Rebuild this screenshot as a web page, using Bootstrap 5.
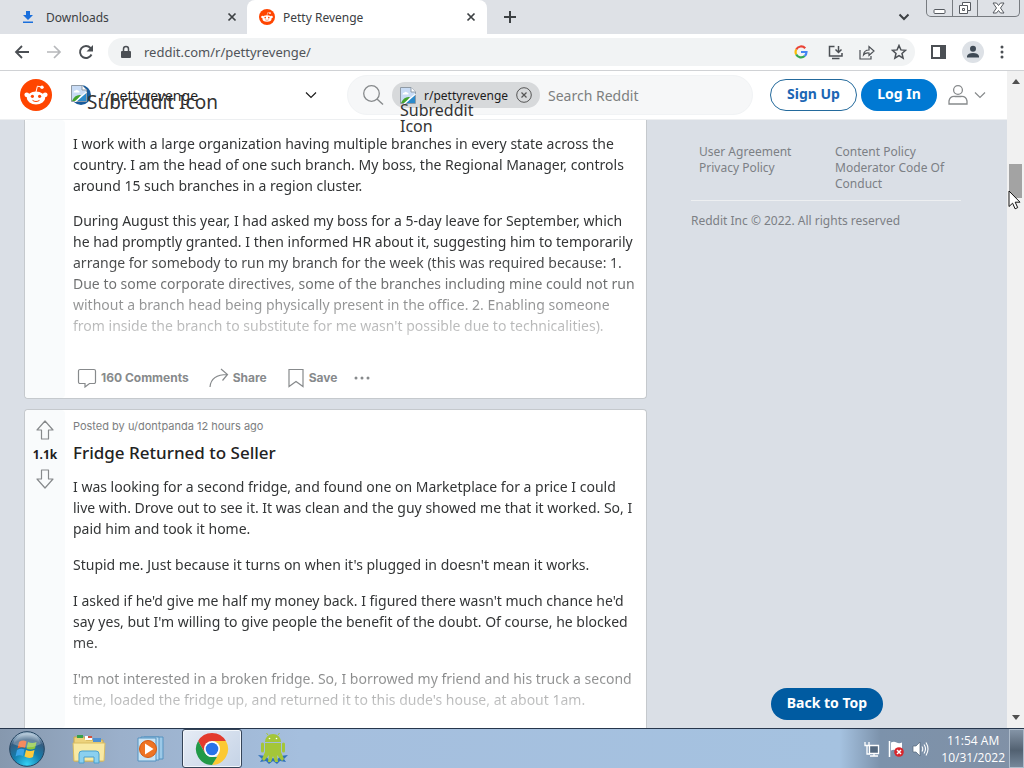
<!DOCTYPE html>
<html lang="en">
<head>
<meta charset="utf-8">
<meta name="viewport" content="width=device-width, initial-scale=1">
<title>Petty Revenge</title>
<link href="https://cdn.jsdelivr.net/npm/bootstrap@5.3.0/dist/css/bootstrap.min.css" rel="stylesheet">
<style>
body{font-family:"Noto Sans","Open Sans",sans-serif;font-size:14px;line-height:21px;color:#1c1c1c;background:#dae0e6}
button{background:none;border:0;padding:0;color:inherit;font:inherit}
svg{display:block;flex:none}
a{color:inherit;text-decoration:none}
.tabstrip{height:34px;background:#dee1e6;font-size:12px;color:#3c4043}
.browser-tab{width:247px;padding:0 10px 0 18px}
.tab-on{background:#fff;border-radius:8px 8px 0 0;width:240px;padding:0 11px 0 12px}
.win-buttons{height:17px;border:1px solid #777b80;border-top:0;border-radius:0 0 5px 5px;margin-right:4px}
.win-buttons button{width:25px;display:grid;place-items:center}
.win-buttons button+button{border-left:1px solid #777b80}
.win-buttons button:last-child{width:42px}
.toolbar{height:37px;background:#fff;border-bottom:1px solid #d0d2d5;color:#4b4f54;padding:0 20px 0 14px}
.omnibox{height:28px;background:#f1f3f4;border-radius:14px;padding:0 8px 0 12px;margin-left:14px}
.omnibox input{border:0;background:none;outline:0;font-size:13px;color:#505459;min-width:0;padding:0}
.viewport-row{min-height:0}
.site{background:#dadfe6;min-width:0}
.site-head{height:49px;background:#fff;border-bottom:1px solid #edeff1;padding:0 20px;z-index:2}
.community{width:248px;margin-left:18px;font-size:14px}
.alt-text{position:absolute;left:17px;top:5px;font-size:19px;line-height:24px;white-space:nowrap;color:#333}
.search-box{height:40px;width:406px;margin-left:29px;border-radius:20px;background:#f6f7f8;border:1px solid #f1f3f5;padding-left:14px}
.search-box input{border:0;background:none;outline:0;min-width:0;font-size:14px;padding:0}
.search-box input::placeholder{color:#7d7f80;opacity:1}
.chip{height:26px;width:148px;border-radius:13px;background:#d7d9db;padding:0 8px;margin:0 8px;font-size:12px}
.chip .alt-text{left:8px;top:20px;font-size:16px;line-height:16px;width:80px;white-space:normal}
.pill{height:32px;border-radius:16px;font-weight:700;font-size:14px;line-height:20px;padding-bottom:2px}
.btn-sign{width:87px;border:1px solid #246a9c;color:#1c66b4}
.btn-log{width:76px;background:#0079d3;color:#fff;margin-left:4px}
.user-menu{margin-left:6px}
.feed{width:623px;margin-left:24px}
.post{background:#fff;border:1px solid #c5c9cd;border-radius:4px}
.post.first{border-top:0;border-radius:0 0 4px 4px;height:279px;margin-bottom:10px}
.post.second{border-bottom:0;border-radius:4px 4px 0 0;min-height:0}
.votes{width:40px;background:#f9fbfc;border-radius:4px;padding-top:10px;font-size:12px;font-weight:700;flex:none}
.post-main{padding:0 8px;min-width:0}
.post-text{color:#333536}
.post-text p{margin:0 0 14px}
.first .post-text{margin-top:13px;height:214px;-webkit-mask-image:linear-gradient(#000 55%,transparent 108%);mask-image:linear-gradient(#000 55%,transparent 108%)}
.second .post-text{-webkit-mask-image:linear-gradient(#000 160px,transparent 256px);mask-image:linear-gradient(#000 160px,transparent 256px);height:250px}
.second .post-text p{margin-bottom:15px}
.actions{font-family:Inter,"Noto Sans",sans-serif;font-size:12px;font-weight:700;color:#878a8c;margin:20px 4px 0}
.meta{font-family:Inter,"Noto Sans",sans-serif;font-size:11px;line-height:16px;color:#7c7e80;padding-top:8px}
.post-title{font-size:17px;line-height:22px;font-weight:500;color:#222;margin:8px 0 12px}
.aside-col{width:270px;margin-left:44px;font-size:12px;line-height:16px;color:#7c8085;padding-top:24px}
.policy{padding:0 0 8px 8px;border-bottom:1px solid #edeff1}
.policy>div{width:136px}
.policy>div:last-child{width:126px}
.to-top{position:absolute;right:124px;bottom:8px;width:112px;background:#005ba1;color:#fff}
.scroll-rail{width:17px;background:#f1f1f1;flex:none}
.scroll-grip{width:13px;height:34px;background:#a3a3a3;margin-top:80px}
.pointer{position:absolute;right:3px;top:119px}
.taskbar{height:40px;border-top:1px solid #26364c;background:linear-gradient(90deg,#8698ae 0,#9bb0cb 120px,#a5bfde 300px,#a5c2e0 82%,#7c92ab 86%,#8191a6 100%);color:#fff;font-family:"Open Sans","Noto Sans",sans-serif;font-size:12px;line-height:17px}
.task-btn{width:62px;height:39px;display:grid;place-items:center}
.task-btn:first-child{width:54px}
.task-on{width:60px;background:linear-gradient(135deg,#e6ecf5,#c5d3e6);border:1px solid #354458;border-radius:3px;box-shadow:inset 0 0 0 1px #f2f6fb}
.show-desk{width:15px;height:39px;border:1px solid #aebccb;background:linear-gradient(#8494a6,#526171 55%,#75879a)}
</style>
</head>
<body class="vh-100 overflow-hidden d-flex flex-column">
<svg class="d-none">
  <symbol id="snoo" viewBox="0 0 32 32"><circle cx="16" cy="16" r="16" fill="#ff4500"/><g fill="#fff"><circle cx="6.8" cy="15.8" r="2.4"/><circle cx="25.2" cy="15.8" r="2.4"/><ellipse cx="16" cy="19" rx="9.2" ry="6.4"/><circle cx="22" cy="8.2" r="1.7"/></g><path d="M16 13l1.4-5.8L21.5 8" fill="none" stroke="#fff" stroke-width="1"/><g fill="#ff4500"><circle cx="12.4" cy="17.3" r="1.6"/><circle cx="19.6" cy="17.3" r="1.6"/></g><path d="M12.5 21.3c1.8 1.6 5.200 1.600 7 0" fill="none" stroke="#ff4500" stroke-width="1"/></symbol>
  <symbol id="broken" viewBox="0 0 16 17"><path d="M.5.5h10.500l4.500 4.500v11.500H.5z" fill="#c9dcf5" stroke="#8f9aa5"/><path d="M11 .5V5h4.500" fill="#fff" stroke="#8f9aa5"/><path d="M2.500 7.500q0-2 2-2 1-1.700 2.500 0 2 0 1.500 2z" fill="#fff"/><path d="M1 16q3-7 9-6l-5 6z" fill="#43a32c"/><path d="M6 16l9-9v9z" fill="#2b8acb"/><path d="M4 17L15.500 7" stroke="#fff" stroke-width="1.300"/></symbol>
  <symbol id="down" viewBox="0 0 14 8"><path d="M2 1.500l5 5 5-5" fill="none" stroke="currentColor" stroke-width="1.200"/></symbol>
  <symbol id="cross" viewBox="0 0 10 10"><path d="M1.500 1.500l7 7m0-7l-7 7" stroke="#3c4043" stroke-width="1.700"/></symbol>
  <symbol id="vote" viewBox="0 0 18 20"><path d="M9 1L1 10h4.500v9h7v-9H17z" fill="none" stroke="#878a8c" stroke-width="1.200" stroke-linejoin="round"/></symbol>
</svg>

<nav class="tabstrip d-flex" aria-label="Tabs">
  <div class="browser-tab d-flex align-items-center"><svg class="me-2 ms-1" width="12" height="14" viewBox="0 0 12 14"><path d="M4 1h4v4h3L6 10 1 5h3zM1 11.500h10v1.500H1z" fill="#1a6fdc"/></svg><a href="#" class="me-auto ms-1">Downloads</a><button aria-label="Close Downloads"><svg width="10" height="10"><use href="#cross"/></svg></button></div>
  <div class="browser-tab tab-on d-flex align-items-center"><svg class="me-2" width="16" height="16"><use href="#snoo"/></svg><a href="#" class="me-auto">Petty Revenge</a><button aria-label="Close Petty Revenge"><svg width="10" height="10"><use href="#cross"/></svg></button></div>
  <button class="ms-3" aria-label="New tab"><svg width="14" height="14" viewBox="0 0 14 14"><path d="M7 1v12M1 7h12" stroke="#3c4043" stroke-width="2"/></svg></button>
  <button class="ms-auto me-3" aria-label="Search tabs"><svg width="12" height="8" viewBox="0 0 12 8"><path d="M1.500 1.500L6 6l4.500-4.500" fill="none" stroke="#3c4043" stroke-width="2"/></svg></button>
  <div class="win-buttons d-flex"><button aria-label="Minimize"><svg width="13" height="14" viewBox="0 0 13 14"><rect x="1" y="8.500" width="11" height="4" rx="1" fill="#fff" stroke="#565a60"/></svg></button><button aria-label="Restore"><svg width="14" height="14" viewBox="0 0 14 14"><path d="M4.500 1.500h8v8h-3v3h-8v-8h3z" fill="#fff" stroke="#565a60"/><path d="M4.500 4.500h5v5M4.500 7.500h2v2h-2z" fill="none" stroke="#565a60"/></svg></button><button aria-label="Close window"><svg width="13" height="12" viewBox="0 0 13 12"><path d="M1 1h3.500l2 2.500L8.500 1H12L8.500 6l3.500 5H8.500l-2-2.500-2 2.500H1l3.500-5z" fill="#fff" stroke="#565a60"/></svg></button></div>
</nav>

<div class="toolbar d-flex align-items-center">
  <button aria-label="Back"><svg width="16" height="16" viewBox="0 0 16 16"><path d="M15 8H2m6-6L2 8l6 6" fill="none" stroke="#4b4f54" stroke-width="1.800"/></svg></button>
  <button aria-label="Forward" class="ms-3"><svg width="16" height="16" viewBox="0 0 16 16"><path d="M1 8h13M8 2l6 6-6 6" fill="none" stroke="#b6b8bb" stroke-width="1.700"/></svg></button>
  <button aria-label="Reload" class="ms-3"><svg width="16" height="16" viewBox="0 0 16 16"><path d="M13.500 10.500A6 6 0 1 1 12.500 4L14 5.500" fill="none" stroke="#4b4f54" stroke-width="1.900"/><path d="M15 1v6.500H8.500z" fill="#4b4f54"/></svg></button>
  <div class="omnibox d-flex align-items-center flex-grow-1">
    <svg width="12" height="14" viewBox="0 0 12 14"><path d="M2 6h8a1 1 0 0 1 1 1v5a1 1 0 0 1-1 1H2a1 1 0 0 1-1-1V7a1 1 0 0 1 1-1z" fill="#4b4f54"/><path d="M3.500 6V4a2.500 2.500 0 0 1 5 0v2" fill="none" stroke="#4b4f54" stroke-width="1.500"/></svg>
    <input class="flex-grow-1 ms-2 ps-1" aria-label="Address" value="reddit.com/r/pettyrevenge/">
    <svg width="14" height="14" viewBox="0 0 14 14" fill="none" stroke-width="2.200"><path d="M11.200 3.200A5.500 5.500 0 0 0 2.200 4.500" stroke="#ea4335"/><path d="M2.200 4.500a5.500 5.500 0 0 0 0 5" stroke="#fbbc05"/><path d="M2.200 9.500a5.500 5.500 0 0 0 8.500 1.500" stroke="#34a853"/><path d="M7 7h5.500a5.500 5.500 0 0 1-1.800 4" stroke="#4285f4"/></svg>
    <button class="ms-3" aria-label="Install"><svg class="mx-1" width="15" height="15" viewBox="0 0 15 15"><path d="M6.500 1.500h-5v9.500H14V8M4 13.500h7.500" fill="none" stroke="#4b4f54" stroke-width="1.500"/><path d="M10.500 1v6M7.500 4.500l3 3 3-3" fill="none" stroke="#4b4f54" stroke-width="1.500"/></svg></button>
    <button class="ms-2" aria-label="Share page"><svg class="mx-1" width="16" height="15" viewBox="0 0 16 15"><path d="M1 5v9h11v-3M4.500 10Q5 5 10 5V1.500l5 4.500-5 4.500V8Q6.500 7.500 4.500 10z" fill="none" stroke="#4b4f54" stroke-width="1.200"/></svg></button>
    <button class="ms-2" aria-label="Bookmark"><svg class="ms-1" width="16" height="16" viewBox="0 0 16 16"><path d="M8 1.500l1.900 4.400 4.700.4-3.600 3.100 1.100 4.700L8 11.600l-4.100 2.500L5 9.400 1.400 6.300l4.700-.4z" fill="none" stroke="#4b4f54" stroke-width="1.500"/></svg></button>
  </div>
  <button class="ms-3" aria-label="Side panel"><svg width="15" height="14" viewBox="0 0 15 14"><path d="M1 1h13v12H1z" fill="none" stroke="#4b4f54" stroke-width="2"/><path d="M9 1h5v12H9z" fill="#4b4f54"/></svg></button>
  <button class="ms-3" aria-label="Profile"><svg width="22" height="22" viewBox="0 0 22 22"><circle cx="11" cy="11" r="11" fill="#dde1e6"/><circle cx="11" cy="7.800" r="3" fill="#3f4a55"/><path d="M5 16.500V15q1-3 6-3t6 3v1.500z" fill="#3f4a55"/></svg></button>
  <button class="ms-3" aria-label="Menu"><svg width="4" height="14" viewBox="0 0 4 14" fill="#4b4f54"><circle cx="2" cy="2" r="1.500"/><circle cx="2" cy="7" r="1.500"/><circle cx="2" cy="12" r="1.500"/></svg></button>
</div>

<div class="viewport-row d-flex flex-grow-1 position-relative">
<div class="site flex-grow-1 d-flex flex-column position-relative">
  <header class="site-head d-flex align-items-center position-relative">
    <a href="#" aria-label="Reddit home"><svg width="32" height="32"><use href="#snoo"/></svg></a>
    <button class="community d-flex align-items-center position-relative">
      <svg width="22" height="20" viewBox="0 0 22 20"><circle cx="11" cy="10" r="10" fill="#175a9b"/><use href="#broken" x="1" width="16" height="17"/></svg>
      <span class="ms-2">r/pettyrevenge</span><span class="alt-text">Subreddit Icon</span>
      <svg class="ms-auto" width="14" height="8"><use href="#down"/></svg>
    </button>
    <form class="search-box d-flex align-items-center">
      <svg width="22" height="22" viewBox="0 0 22 22"><circle cx="9.500" cy="9.500" r="7.800" fill="none" stroke="#878a8c" stroke-width="1.300"/><path d="M15 15l6 5.500" stroke="#878a8c" stroke-width="1.400"/></svg>
      <div class="chip d-flex align-items-center position-relative"><svg width="16" height="17"><use href="#broken"/></svg><span class="ms-2 me-auto">r/pettyrevenge</span><button type="button" aria-label="Remove filter"><svg width="16" height="16" viewBox="0 0 16 16" fill="none" stroke="#555"><circle cx="8" cy="8" r="7.300"/><path d="M5.500 5.500l5 5m0-5l-5 5" stroke-width="1.200"/></svg></button><span class="alt-text">Subreddit Icon</span></div>
      <input class="flex-grow-1" type="search" aria-label="Search" placeholder="Search Reddit">
    </form>
    <button class="pill btn-sign ms-auto">Sign Up</button>
    <button class="pill btn-log">Log In</button>
    <button class="user-menu d-flex align-items-center" aria-label="User menu"><svg class="ms-1 me-1" width="22" height="22" viewBox="0 0 22 22" fill="none" stroke="#878a8c" stroke-width="1.300"><circle cx="11" cy="6" r="4.400"/><path d="M2 20v-3q1-5 6-4.500h6q5-.5 6 4.500v3z"/></svg><svg width="14" height="8" color="#878a8c"><use href="#down"/></svg></button>
  </header>
  <div class="d-flex flex-grow-1 viewport-row">
    <main class="feed d-flex flex-column">
      <article class="post first d-flex">
        <div class="votes"></div>
        <div class="post-main flex-grow-1">
          <div class="post-text">
            <p>I work with a large organization having multiple branches in every state across the country. I am the head of one such branch. My boss, the Regional Manager, controls around 15 such branches in a region cluster.</p>
            <p>During August this year, I had asked my boss for a 5-day leave for September, which he had promptly granted. I then informed HR about it, suggesting him to temporarily arrange for somebody to run my branch for the week (this was required because: 1. Due to some corporate directives, some of the branches including mine could not run without a branch head being physically present in the office. 2. Enabling someone from inside the branch to substitute for me wasn't possible due to technicalities).</p>
          </div>
          <div class="actions d-flex align-items-center">
            <button class="d-flex align-items-center"><svg class="me-1" width="20" height="20" viewBox="0 0 20 20"><path d="M3 1.500h14A1.500 1.500 0 0 1 18.500 3v11a1.500 1.500 0 0 1-1.500 1.500h-4.500L8 19v-3.500H3A1.500 1.500 0 0 1 1.500 14V3A1.500 1.500 0 0 1 3 1.500z" fill="none" stroke="#878a8c" stroke-width="1.200"/></svg>160 Comments</button>
            <button class="d-flex align-items-center ms-3"><svg class="ms-1 me-1" width="20" height="20" viewBox="0 0 20 20"><path d="M1 19Q2 6.500 18.500 6.500M12 1l6.500 5.500-5 6" fill="none" stroke="#878a8c" stroke-width="1.200"/></svg>Share</button>
            <button class="d-flex align-items-center ms-3"><svg class="ms-1 me-1" width="18" height="20" viewBox="0 0 18 20"><path d="M2 1.500h14v17l-7-5-7 5z" fill="none" stroke="#878a8c" stroke-width="1.200"/></svg>Save</button>
            <button class="ms-3" aria-label="More"><svg width="18" height="4" viewBox="0 0 18 4" fill="#878a8c"><circle cx="3" cy="2" r="1.500"/><circle cx="9" cy="2" r="1.500"/><circle cx="15" cy="2" r="1.500"/></svg></button>
          </div>
        </div>
      </article>
      <article class="post second d-flex flex-grow-1 overflow-hidden">
        <div class="votes d-flex flex-column align-items-center"><button aria-label="Upvote"><svg width="18" height="20"><use href="#vote"/></svg></button><span class="my-1">1.1k</span><button aria-label="Downvote"><svg width="18" height="20" viewBox="0 0 18 20"><path d="M9 19L1 10h4.500V1h7v9H17z" fill="none" stroke="#878a8c" stroke-width="1.200" stroke-linejoin="round"/></svg></button></div>
        <div class="post-main flex-grow-1">
          <div class="meta">Posted by <a href="#">u/dontpanda</a> <a href="#">12 hours ago</a></div>
          <h2 class="post-title">Fridge Returned to Seller</h2>
          <div class="post-text">
            <p>I was looking for a second fridge, and found one on Marketplace for a price I could live with. Drove out to see it. It was clean and the guy showed me that it worked. So, I paid him and took it home.</p>
            <p>Stupid me. Just because it turns on when it's plugged in doesn't mean it works.</p>
            <p>I asked if he'd give me half my money back. I figured there wasn't much chance he'd say yes, but I'm willing to give people the benefit of the doubt. Of course, he blocked me.</p>
            <p>I'm not interested in a broken fridge. So, I borrowed my friend and his truck a second time, loaded the fridge up, and returned it to this dude's house, at about 1am.</p>
          </div>
        </div>
      </article>
    </main>
    <aside class="aside-col">
      <div class="policy d-flex"><div><a class="d-block" href="#">User Agreement</a><a class="d-block" href="#">Privacy Policy</a></div><div><a class="d-block" href="#">Content Policy</a><a class="d-block" href="#">Moderator Code Of Conduct</a></div></div>
      <div class="mt-2 pt-1">Reddit Inc © 2022. All rights reserved</div>
    </aside>
  </div>
  <button class="pill to-top">Back to Top</button>
</div>
<div class="scroll-rail d-flex flex-column align-items-center pt-2">
  <svg width="8" height="5" viewBox="0 0 8 5"><path d="M0 5l4-5 4 5z" fill="#505050"/></svg>
  <div class="scroll-grip"></div>
  <svg class="mt-auto mb-2" width="8" height="5" viewBox="0 0 8 5"><path d="M0 0l4 5 4-5z" fill="#505050"/></svg>
</div>
<svg class="pointer" width="13" height="20" viewBox="0 0 13 20"><path d="M1 1v15.500l3.600-3.300 2.500 5.600 2.600-1.200-2.500-5.400H12z" fill="#fff" stroke="#111"/></svg>
</div>

<footer class="taskbar d-flex align-items-center">
  <button class="task-btn" aria-label="Start"><svg width="36" height="36" viewBox="0 0 36 36"><defs><radialGradient id="orb" cx=".5" cy=".95" r=".9"><stop offset="0" stop-color="#35d2f5"/><stop offset=".45" stop-color="#137eae"/><stop offset=".8" stop-color="#355c80"/><stop offset="1" stop-color="#a8c0d4"/></radialGradient></defs><circle cx="18" cy="18" r="17.300" fill="url(#orb)" stroke="#23435f"/><path d="M10 11q4-2.500 7.500-.5L16 17q-3-1.500-7.500.5z" fill="#f0642a"/><path d="M19 11q4 2 8.500 0L26 17.500q-4 2-8.500 0z" fill="#8cc63e"/><path d="M8 19q4-2 7.500-.5L14 25q-3.500-1.500-7.500.5z" fill="#3aa4e8"/><path d="M17 19q4 2 8.500 0L24 26q-4 2-8.500-.5z" fill="#fdca3c"/><path d="M4 13Q7 3 18 2.500T32 13Q18 20 4 13z" fill="#fff" opacity=".25"/></svg></button>
  <button class="task-btn ms-1" aria-label="Explorer"><svg width="34" height="30" viewBox="0 0 34 30"><path d="M2 3h10l2 3h17v21H2z" fill="#ecd27c" stroke="#c9a84d"/><path d="M5 1h6v3H5z" fill="#35a04b"/><path d="M13 2h7v4h-7z" fill="#fff"/><path d="M16 2h4v2h-4z" fill="#d5513d"/><path d="M21 4h8v4h-8z" fill="#4e90d2"/><path d="M1 9h32l-1 18H2z" fill="#f8e9a3" stroke="#d8bc63"/><path d="M7 29v-9q0-3 3-3h14q3 0 3 3v9h-5v-6H12v6z" fill="#8bd0ef" stroke="#4ba0cf"/></svg></button>
  <button class="task-btn" aria-label="Media Player"><svg width="28" height="28" viewBox="0 0 28 28"><path d="M7 2h19v22H7z" fill="#9cc9e8" stroke="#5592c0"/><path d="M4 2h18v23H4z" fill="#b9dcf2" stroke="#5592c0"/><path d="M1 3h18v23H1z" fill="#c9e4f5" stroke="#5592c0"/><circle cx="11" cy="14" r="8.500" fill="#ef7424" stroke="#d25a13"/><path d="M8 8.500v11l8.500-5.500z" fill="#fff"/></svg></button>
  <button class="task-btn task-on" aria-label="Chrome"><svg width="34" height="34" viewBox="0 0 34 34"><path d="M17 9h13.900A16 16 0 0 1 17 33l7-12z" fill="#fcc934"/><path d="M3.100 9A16 16 0 0 1 30.900 9H17l-7 12z" fill="#e33b2e"/><path d="M3.100 9L10 21q3 4.500 7 4h5l-5 8A16 16 0 0 1 3.100 9z" fill="#229a48"/><circle cx="17" cy="17" r="8" fill="#fff"/><circle cx="17" cy="17" r="6.300" fill="#2a73e8"/></svg></button>
  <button class="task-btn" aria-label="Android"><svg width="30" height="32" viewBox="0 0 30 32"><path d="M0 22l8 1 3 4 4-2 4 2 3-4 8-1-4 4 2 3-6-1-3 3-4-3-4 3-3-3-6 1 2-3z" fill="#2f72b8"/><path d="M7 9a8 8 0 0 1 16 0zM7 10h16v9l3 7-2 2-5-6 1 7h-3l-2-6-2 6h-3l1-7-5 6-2-2 3-7z" fill="#a4c639"/><path d="M4.500 11v7m21-7v7" stroke="#a4c639" stroke-width="3" stroke-linecap="round"/><path d="M10 2L8.500 0M20 2l1.500-2" stroke="#a4c639"/><circle cx="11.500" cy="5.500" r=".8" fill="#fff"/><circle cx="18.500" cy="5.500" r=".8" fill="#fff"/></svg></button>
  <div class="ms-auto d-flex align-items-center">
    <svg width="16" height="16" viewBox="0 0 16 16"><path d="M5.500 4.500h9v8h-9zM10 12.500v2M6 15h8" fill="#55697f" stroke="#fff" stroke-width="1.300"/><path d="M1 1v3.500h4V1M3 4.500V13h3" fill="none" stroke="#fff" stroke-width="1.300"/></svg>
    <svg class="ms-2" width="16" height="16" viewBox="0 0 16 16"><path d="M1.500 0v16" stroke="#fff" stroke-width="1.500"/><path d="M3 1.500q3-1.500 5.500 0t5.500 0v8q-3 1.500-5.500 0T3 9.500z" fill="#fff"/><circle cx="11" cy="11" r="4.800" fill="#d8262c"/><path d="M9 9l4 4m0-4l-4 4" stroke="#fff" stroke-width="1.500"/></svg>
    <svg class="ms-2" width="17" height="16" viewBox="0 0 17 16"><path d="M1 5h3l4-4v14l-4-4H1z" fill="#fff" stroke="#53657a" stroke-width=".7"/><path d="M10 5.500q1.500 2.500 0 5M12 3.500q3 4.500 0 9M14 1.500q4 6.500 0 13" fill="none" stroke="#fff" stroke-width="1.100"/></svg>
    <div class="text-center ms-2 me-1 ps-1">11:54 AM<br>10/31/2022</div>
    <button class="show-desk" aria-label="Show desktop"></button>
  </div>
</footer>
<script src="https://cdn.jsdelivr.net/npm/bootstrap@5.3.0/dist/js/bootstrap.bundle.min.js"></script>
</body>
</html>
